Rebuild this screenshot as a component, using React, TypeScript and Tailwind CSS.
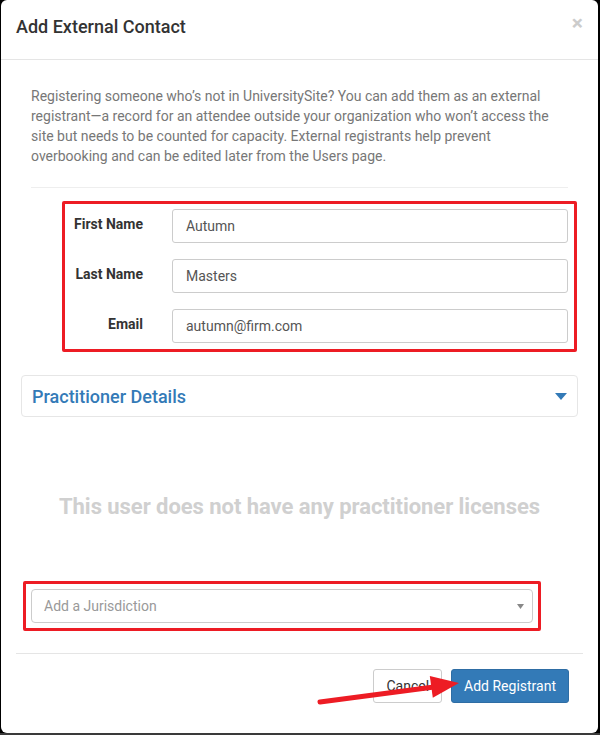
import React from "react";

const font = { fontFamily: "Roboto, 'Noto Sans', 'Liberation Sans', sans-serif" };

function Row({ label, value }: { label: string; value: string }) {
  return (
    <div className="flex h-[34px]">
      <div className="w-[112px] shrink-0 pt-[5px] text-right text-[14px] font-bold leading-[20px] text-[#333]">
        {label}
      </div>
      <div className="ml-[29px] flex h-[34px] flex-1 items-center rounded-[3px] border border-[#ccc] bg-white pl-[13px] text-[14px] text-[#555]">
        {value}
      </div>
    </div>
  );
}

export default function App() {
  return (
    <div className="relative h-[735px] w-[600px] overflow-hidden bg-black" style={font}>
      <div className="ml-[1px] flex h-[733px] w-[597px] flex-col rounded-[6px] bg-white">
        {/* header */}
        <div className="flex h-[60px] shrink-0 items-start justify-between border-b border-[#e5e5e5] px-[15px] pt-[16px]">
          <div className="text-[18px] font-medium leading-[22px] text-[#333]">Add External Contact</div>
          <div className="mt-[-3px] text-[21px] font-bold leading-none text-[#ccc]">×</div>
        </div>

        {/* body */}
        <div className="px-[20px]">
          <div className="px-[10px] pt-[26px]">
            <p className="text-[14px] leading-[20px] text-[#777]">
              Registering someone who’s not in UniversitySite? You can add them as an external registrant—a record for an attendee outside your organization who won’t access the site but needs to be counted for capacity. External registrants help prevent overbooking and can be edited later from the Users page.
            </p>
            <div className="mt-[21px] border-t border-[#eee]" />
            <div className="relative mt-[21px] flex flex-col gap-[16px]">
              <Row label="First Name" value="Autumn" />
              <Row label="Last Name" value="Masters" />
              <Row label="Email" value="autumn@firm.com" />
              <div className="pointer-events-none absolute bottom-[-9px] left-[31px] right-[-9px] top-[-8px] rounded-[2px] border-[3px] border-[#ed1c24]" />
            </div>
          </div>

          {/* panel */}
          <div className="mt-[32px] flex h-[42px] items-center justify-between rounded-[4px] border border-[#e6e6e6] px-[10px]">
            <div className="text-[18px] font-medium text-[#337ab7]">Practitioner Details</div>
            <svg width="12" height="7" viewBox="0 0 12 7">
              <polygon points="0,0 12,0 6,7" fill="#337ab7" />
            </svg>
          </div>

          <div className="mt-[77px] text-center text-[22px] font-bold leading-[26px] tracking-[-0.05px] text-[#d0d0d0]">
            This user does not have any practitioner licenses
          </div>

          <div className="px-[10px]">
            <div className="relative mt-[69px] w-[502px]">
              <div className="flex h-[34px] items-center justify-between rounded-[4px] border border-[#ccc] pl-[12px] pr-[8px] text-[14px] text-[#999]">
                <span>Add a Jurisdiction</span>
                <svg width="7" height="5" viewBox="0 0 7 5">
                  <polygon points="0,0 7,0 3.5,5" fill="#888" />
                </svg>
              </div>
              <div className="pointer-events-none absolute bottom-[-8px] left-[-8px] right-[-8px] top-[-8px] rounded-[2px] border-[3px] border-[#ed1c24]" />
            </div>
          </div>
        </div>

        {/* footer */}
        <div className="mx-[15px] mt-[30px] flex justify-end gap-[9px] border-t border-[#e5e5e5] pr-[14px] pt-[15px]">
          <div className="flex h-[34px] items-center rounded-[3px] border border-[#ccc] bg-white px-[12px] text-[14px] text-[#333]">
            Cancel
          </div>
          <div className="flex h-[34px] items-center rounded-[3px] border border-[#2e6da4] bg-[#337ab7] px-[12px] text-[14px] text-white">
            Add Registrant
          </div>
        </div>
      </div>
      <div className="h-[2px] bg-[#3a3a3a]" />

      {/* annotation arrow */}
      <svg className="pointer-events-none absolute left-0 top-0" width="600" height="735">
        <line x1="320" y1="702" x2="434" y2="687" stroke="#ed1c24" strokeWidth="5" strokeLinecap="round" />
        <polygon points="459,683 432.8,697.7 429.8,675.9" fill="#ed1c24" />
      </svg>
    </div>
  );
}
